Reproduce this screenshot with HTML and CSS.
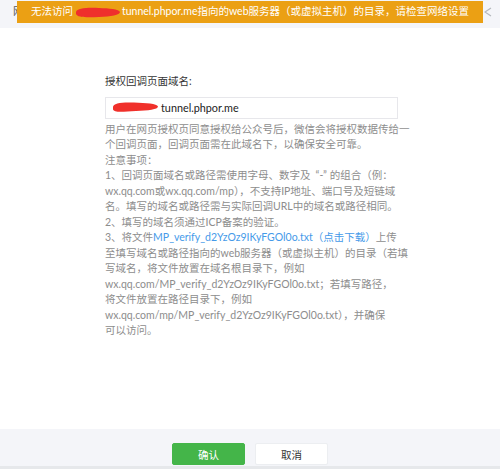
FILE: index.html
```html
<!DOCTYPE html>
<html lang="zh-CN">
<head>
<meta charset="utf-8">
<title>授权回调页面域名</title>
<link rel="stylesheet" href="styles.css">
</head>
<body>
<div class="dialog">
  <header class="hd">
    <span class="hd-title">网</span>
    <svg class="close" width="8" height="10" viewBox="0 0 8 10"><path d="M7 1 L1 5 L7 9" fill="none" stroke="#b4b7bd" stroke-width="1.2"/></svg>
    <div class="toast">无法访问<svg class="mask mask-toast" width="46" height="13" viewBox="0 0 46 13"><path d="M1,6 C2,2 12,1.5 24,2 C34,2.4 44,3 45,6 C45,9 36,10.5 24,11 C12,11.6 2,11.5 1,8 Z" fill="#ef2f2c"/></svg>tunnel.phpor.me指向的web服务器（或虚拟主机）的目录，请检查网络设置</div>
  </header>
  <main class="bd">
    <div class="form">
      <div class="label">授权回调页面域名:</div>
      <div class="input"><svg class="mask mask-input" width="47" height="13" viewBox="0 0 47 13"><path d="M1,6 C1,2 10,1 22,1.5 C34,2 45,2.5 46,5.5 C46,8.5 36,9.5 24,10 C12,10.6 2,12 1,8.5 Z" fill="#f0302b"/></svg>tunnel.phpor.me</div>
      <p class="tips">用户在网页授权页同意授权给公众号后，微信会将授权数据传给一<br>个回调页面，回调页面需在此域名下，以确保安全可靠。<br>注意事项：<br>1、回调页面域名或路径需使用字母、数字及<span class="q">“-”</span>的组合（例：<br>wx.qq.com或wx.qq.com/mp），不支持IP地址、端口号及短链域<br>名。填写的域名或路径需与实际回调URL中的域名或路径相同。<br>2、填写的域名须通过ICP备案的验证。<br>3、将文件<a class="link">MP_verify_d2YzOz9IKyFGOl0o.txt（点击下载）</a>上传<br>至填写域名或路径指向的web服务器（或虚拟主机）的目录（若填<br>写域名，将文件放置在域名根目录下，例如<br>wx.qq.com/MP_verify_d2YzOz9IKyFGOl0o.txt；若填写路径，<br>将文件放置在路径目录下，例如<br>wx.qq.com/mp/MP_verify_d2YzOz9IKyFGOl0o.txt），并确保<br>可以访问。</p>
    </div>
  </main>
  <footer class="ft">
    <button class="btn btn-primary">确认</button>
    <button class="btn btn-default">取消</button>
  </footer>
</div>
</body>
</html>
```
FILE: styles.css
```css
* { box-sizing: border-box; }
html, body { margin: 0; padding: 0; background: #fff; }
body {
  font-family: "Lato", "Noto Sans CJK SC", sans-serif;
  font-size: 10.5px;
  line-height: 15.5px;
  color: #333;
}
.dialog {
  width: 500px;
  height: 469px;
  display: flex;
  flex-direction: column;
}
.hd {
  position: relative;
  height: 28px;
  background: #f4f5f9;
  display: flex;
  align-items: center;
  justify-content: space-between;
  padding: 0 8px 0 13px;
}
.hd-title { color: #555; font-size: 10.5px; white-space: nowrap; margin-top: -4px; }
.close { margin-top: -5px; }
.toast {
  position: absolute;
  left: 17px;
  top: 1px;
  width: 466px;
  height: 22px;
  background: #eba014;
  color: #fff;
  display: flex;
  align-items: center;
  justify-content: center;
  white-space: nowrap;
}
.mask { display: inline-block; flex: none; }
.mask-toast { margin: 0 1px 0 2px; }
.bd { flex: 1; }
.form {
  margin: 46px 0 0 105px;
  width: 293px;
}
.label { color: #353535; }
.input {
  margin-top: 7px;
  height: 22px;
  border: 1px solid #e7e7eb;
  display: flex;
  align-items: center;
  padding-left: 6px;
  color: #222;
  font-size: 10.8px;
}
.mask-input { margin-right: 2px; }
.tips {
  margin: 3px 0 0;
  color: #8d8d8d;
  white-space: nowrap;
}
.q { padding: 0 3px 0 5px; }
.link { color: #459ae9; }
.ft {
  height: 40px;
  background: #f4f5f9;
  border-bottom: 3px solid #e6e8eb;
  display: flex;
  justify-content: center;
  align-items: flex-start;
  gap: 10px;
  padding-top: 14px;
}
.btn {
  width: 73px;
  height: 22px;
  border-radius: 2px;
  font-family: inherit;
  font-size: 10.5px;
  padding: 0;
  cursor: pointer;
}
.btn-primary { background: #44b549; border: 1px solid #44b549; color: #fff; }
.btn-default { background: #fff; border: 1px solid #eceef1; color: #333; }
```
